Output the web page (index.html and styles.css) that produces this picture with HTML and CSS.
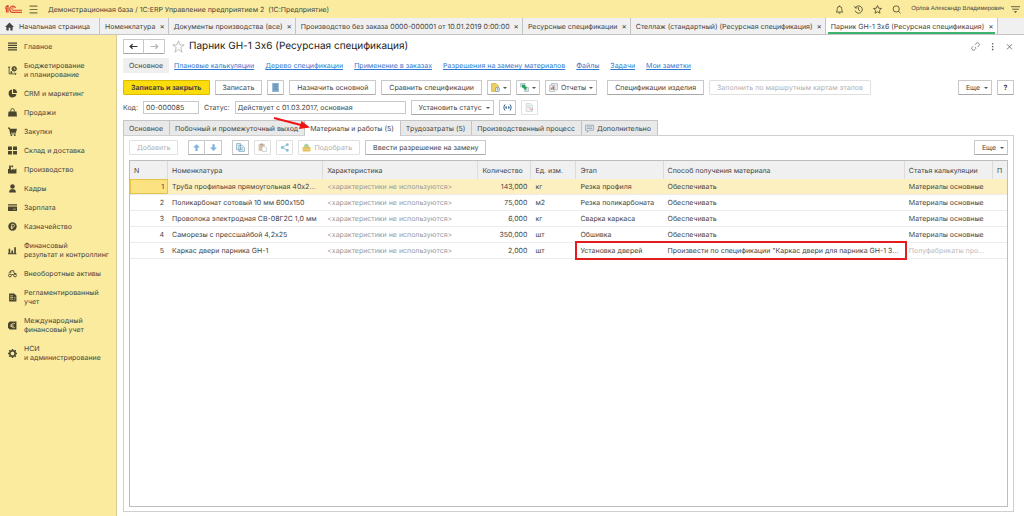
FILE: index.html
```
<!DOCTYPE html>
<html lang="ru">
<head>
    <meta charset="UTF-8">
    <meta name="viewport" content="width=device-width, initial-scale=1.0">
    <title>Парник GH-1 3x6 (Ресурсная спецификация)</title>
    <link rel="stylesheet" href="styles.css">
</head>
<body>

    <header class="topbar">
        <svg class="logo" viewBox="0 0 34 16" fill="none" stroke="#dc4a33" stroke-width="2.500">
            <path d="M0 6h3V15M1 4l5-3v14"/>
            <path d="M21 6a6 6 0 1 0-5 8.500h18"/>
            <path d="M18 6.500a2.500 2.500 0 1 0-2 4h18" stroke-width="2"/>
        </svg>
        <button class="icon-btn" aria-label="Меню">
            <svg viewBox="0 0 16 16" fill="none" stroke="#7d7448" stroke-width="1.800"><path d="M1 2h14M1 8h14M1 14h14"/></svg>
        </button>
        <span class="app-title">Демонстрационная база / 1С:ERP Управление предприятием 2 &nbsp;(1С:Предприятие)</span>
        <div class="top-icons">
            <button class="icon-btn" aria-label="Уведомления">
                <svg viewBox="0 0 16 16" fill="none" stroke="#4d4931" stroke-width="1.500"><path d="M2 12.500c2-2 2-3 2-6a4 4 0 0 1 8 0c0 3 0 4 2 6zM6.500 14.500h3M8 1v2"/></svg>
            </button>
            <button class="icon-btn" aria-label="История">
                <svg viewBox="0 0 16 16" fill="none" stroke="#4d4931" stroke-width="1.500"><path d="M2.500 5A6.500 6.500 0 1 1 2 10M1 2l1.500 3.500L6 5M8 4v4.500l3 2"/></svg>
            </button>
            <button class="icon-btn" aria-label="Избранное">
                <svg viewBox="0 0 16 16" fill="none" stroke="#4d4931" stroke-width="1.500"><path d="M8 1l2.100 4.700 5 .5-3.800 3.400 1.100 5L8 12l-4.400 2.600 1.100-5L.9 6.200l5-.5z"/></svg>
            </button>
            <button class="icon-btn" aria-label="Поиск">
                <svg viewBox="0 0 16 16" fill="none" stroke="#4d4931" stroke-width="1.500"><circle cx="7.500" cy="7" r="5.500"/><path d="M11.500 11l3.500 4"/></svg>
            </button>
            <span class="user">Орлов Александр Владимирович</span>
            <button class="icon-btn" aria-label="Настройки">
                <svg viewBox="0 0 16 16" fill="none" stroke="#4d4931" stroke-width="1.500"><path d="M0 3h16M2 7.500h12"/><path d="M5 11h6l-3 3z" fill="#4d4931" stroke="none"/></svg>
            </button>
        </div>
    </header>

    <nav class="windows">
        <a href="#" class="window home">
            <svg viewBox="0 0 16 16" fill="#444"><path d="M8 1L0 9h2.500v6H6.500v-5h3v5h4V9H16z"/></svg>
            Начальная страница
        </a>
        <a href="#" class="window">Номенклатура <span class="close">×</span></a>
        <a href="#" class="window">Документы производства (все) <span class="close">×</span></a>
        <a href="#" class="window">Производство без заказа 0000-000001 от 10.01.2019 0:00:00 <span class="close">×</span></a>
        <a href="#" class="window">Ресурсные спецификации <span class="close">×</span></a>
        <a href="#" class="window">Стеллаж (стандартный) (Ресурсная спецификация) <span class="close">×</span></a>
        <a href="#" class="window current">Парник GH-1 3x6 (Ресурсная спецификация) <span class="close">×</span></a>
    </nav>

    <div class="workspace">
        <nav class="sections">
            <a href="#"><svg viewBox="0 0 16 16"><path d="M0 1h16v2H0zM0 5h16v2H0zM0 9h16v2H0zM0 13h16v2H0z"/></svg>Главное</a>
            <a href="#"><svg viewBox="0 0 16 16" fill="none" stroke="#4a452e" stroke-width="1.500"><path d="M0 2h4M2 2v12h11M4 11h4M6 9v5M12 11.500l2.500 2.500-2.500 2"/><circle cx="11" cy="5" r="4" fill="#4a452e"/><path d="M11 2.500v3h2.500" stroke="#fbeb9e"/></svg>Бюджетирование<br>и планирование</a>
            <a href="#"><svg viewBox="0 0 16 16"><path d="M7 1a7 7 0 1 0 8 8H7z"/><path d="M9 0a7 7 0 0 1 7 7H9z"/></svg>CRM и маркетинг</a>
            <a href="#"><svg viewBox="0 0 16 16"><path d="M1 6h14l1 9H0z"/><path d="M5 8V4a3 3 0 0 1 6 0v4" fill="none" stroke="#4a452e" stroke-width="1.500"/></svg>Продажи</a>
            <a href="#"><svg viewBox="0 0 16 16"><path d="M0 1h3l1 2h12l-2 7H5l.5 1.500H14V13H4L2 3H0z"/><circle cx="6" cy="14.500" r="1.500"/><circle cx="12" cy="14.500" r="1.500"/></svg>Закупки</a>
            <a href="#"><svg viewBox="0 0 16 16"><path d="M0 1h7v6H0zM9 1h7v6H9zM0 9h7v6H0zM9 9h7v6H9z"/></svg>Склад и доставка</a>
            <a href="#"><svg viewBox="0 0 16 16"><path d="M0 15V7h2V1h3v6l1 2 4-3v3l5-3v9zM6 1h3v3H6z"/></svg>Производство</a>
            <a href="#"><svg viewBox="0 0 16 16"><circle cx="8" cy="4.500" r="4"/><path d="M2 15c0-4 2-5 4-5.500h4c2 .5 4 1.500 4 5.500z"/></svg>Кадры</a>
            <a href="#"><svg viewBox="0 0 16 16"><path d="M0 2h16v2.500H0zM0 6h16v8H0z"/><path d="M9 11h5" stroke="#fbeb9e"/></svg>Зарплата</a>
            <a href="#"><svg viewBox="0 0 16 16"><circle cx="8" cy="8" r="7.500"/><path d="M6.500 13V4h2.500a2.300 2.300 0 0 1 0 5H5M5 11h4" fill="none" stroke="#fbeb9e" stroke-width="1.300"/></svg>Казначейство</a>
            <a href="#"><svg viewBox="0 0 16 16"><path d="M1 5h3v8H1zM6 8h3v5H6zM11 2h3v11h-3zM0 13h15v1.500H0z"/></svg>Финансовый<br>результат и контроллинг</a>
            <a href="#"><svg viewBox="0 0 16 16" fill="none" stroke="#4a452e" stroke-width="1.600"><circle cx="3.500" cy="11.500" r="2.500"/><circle cx="12.500" cy="11.500" r="2.500"/><path d="M1 7l5-4h4l1 5h4M6 10h4M5 3v4"/></svg>Внеоборотные активы</a>
            <a href="#"><svg viewBox="0 0 16 16"><path d="M2 1h9l4 4v10H2z"/><path d="M4 5h5M4 8h5M4 11h5M11 8h2M11 11h2" stroke="#fbeb9e" stroke-width="1.200"/></svg>Регламентированный<br>учет</a>
            <a href="#"><svg viewBox="0 0 16 16"><path d="M3 1h12v14H3L0 12V4z"/><path d="M12 4.500a4 4 0 1 0 0 7M4 7h6M4 9.500h6" fill="none" stroke="#fbeb9e" stroke-width="1.300"/></svg>Международный<br>финансовый учет</a>
            <a href="#"><svg viewBox="0 0 16 16" fill="none" stroke="#4a452e"><circle cx="8" cy="8" r="4.800" stroke-width="2.800"/><path d="M8 0v3M8 13v3M0 8h3M13 8h3M2.300 2.300l2 2M11.700 11.700l2 2M2.300 13.700l2-2M11.700 4.300l2-2" stroke-width="2.500"/></svg>НСИ<br>и администрирование</a>
        </nav>

        <main class="form">
            <div class="title-row">
                <div class="group">
                    <button class="btn nav-btn" aria-label="Назад"><svg viewBox="0 0 16 16" fill="none" stroke="#333" stroke-width="2.200"><path d="M15 8H2M6.500 4L2 8l4.500 4"/></svg></button>
                    <button class="btn nav-btn" aria-label="Вперед"><svg viewBox="0 0 16 16" fill="none" stroke="#b5b5b5" stroke-width="2"><path d="M1 8h13M9.500 4L14 8l-4.500 4"/></svg></button>
                </div>
                <svg class="star" viewBox="0 0 16 16" fill="none" stroke="#b0b0b0"><path d="M8 1l1.800 5H15l-4.200 3.200L12.500 15 8 11.500 3.500 15l1.700-5.800L1 6h5.200z"/></svg>
                <h1>Парник GH-1 3x6 (Ресурсная спецификация)</h1>
                <div class="title-icons">
                    <button class="icon-btn" aria-label="Ссылка"><svg viewBox="0 0 16 16" fill="none" stroke="#777" stroke-width="1.500"><path d="M7 5l2-2.500a3 3 0 0 1 5 4L12 9M9 11l-2 2.500a3 3 0 0 1-5-4L4 7.500M7 9.500h2"/></svg></button>
                    <button class="icon-btn" aria-label="Действия"><svg viewBox="0 0 16 16" fill="#555"><path d="M7 2h2.500v2.500H7zM7 7h2.500v2.500H7zM7 12h2.500v2.500H7z"/></svg></button>
                    <button class="icon-btn" aria-label="Закрыть"><svg viewBox="0 0 16 16" fill="none" stroke="#666" stroke-width="1.500"><path d="M3.500 4l9 9M12.500 4l-9 9"/></svg></button>
                </div>
            </div>

            <nav class="links">
                <a href="#" class="selected">Основное</a>
                <a href="#">Плановые калькуляции</a>
                <a href="#">Дерево спецификации</a>
                <a href="#">Применение в заказах</a>
                <a href="#">Разрешения на замену материалов</a>
                <a href="#">Файлы</a>
                <a href="#">Задачи</a>
                <a href="#">Мои заметки</a>
            </nav>

            <div class="toolbar">
                <button class="btn primary">Записать и закрыть</button>
                <button class="btn">Записать</button>
                <button class="btn square" aria-label="Список"><svg viewBox="0 0 16 16"><path d="M2 0h12v16H2z" fill="#8fb4d0"/><path d="M4 3h8M4 6h8M4 9h8M4 12h8" stroke="#2f6d9c"/></svg></button>
                <button class="btn">Назначить основной</button>
                <button class="btn">Сравнить спецификации</button>
                <button class="btn drop pic" aria-label="Создать на основании"><svg viewBox="0 0 16 16"><path d="M1 1h8l4 4v10H1z" fill="#f0cf63" stroke="#c49c2c"/><circle cx="11.500" cy="11.500" r="4" fill="#e8eef4" stroke="#58789a"/><path d="M11.500 9v3h2" stroke="#58789a" fill="none"/></svg></button>
                <button class="btn drop pic" aria-label="Перейти"><svg viewBox="0 0 16 16"><path d="M1 1h8v6H1zM8 8h7v7H8z" fill="#dce7ee" stroke="#8aa2b0"/><path d="M3 3h6v3h3l-1 7-7-5z" fill="#28a35c"/></svg></button>
                <button class="btn drop pic"><svg viewBox="0 0 16 16"><path d="M4 1h11v11H4z" fill="#e6edf2" stroke="#8ea0ad"/><path d="M1 4h9v11H1z" fill="#f3f5f6" stroke="#8ea0ad"/><path d="M3 12V8h2v4z" fill="#3c9c62"/><path d="M6 12V6h3v6z" fill="#d5584e"/></svg>Отчеты</button>
                <button class="btn apart">Спецификации изделия</button>
                <button class="btn" disabled>Заполнить по маршрутным картам этапов</button>
                <button class="btn drop right">Еще</button>
                <button class="btn square help">?</button>
            </div>

            <div class="toolbar">
                <label for="code">Код:</label>
                <input class="code" id="code" type="text" value="00-000085">
                <label for="status">Статус:</label>
                <input class="status" id="status" type="text" value="Действует с 01.03.2017, основная">
                <button class="btn drop">Установить статус</button>
                <button class="btn square" aria-label="Обмен"><svg viewBox="0 0 18 16" fill="none" stroke="#2c5d8a" stroke-width="2"><path d="M4 2c-3 4-3 8 0 12M14 2c3 4 3 8 0 12"/><path d="M4.500 8h3M10.500 8h3M6.500 5v6M11.500 5v6" stroke-width="1.500"/></svg></button>
                <button class="btn square" disabled aria-label="Документ"><svg viewBox="0 0 16 16"><path d="M2 1h8l3 3v11H2z" fill="#f1f3f5" stroke="#b9c4cd"/><path d="M4 5h6M4 8h6" stroke="#b9c4cd"/><path d="M8 11h6M12 9l2 2-2 2" stroke="#e2a09c" fill="none" stroke-width="1.500"/></svg></button>
            </div>

            <div class="pages">
                <button class="page">Основное</button>
                <button class="page">Побочный и промежуточный выход</button>
                <button class="page active">Материалы и работы (5)
                    <svg class="arrow" viewBox="0 0 38 14"><path d="M1 2l27 7" stroke="#f01414" stroke-width="2"/><path d="M37 11.500l-11 1.500 2.500-8z" fill="#f01414"/></svg>
                </button>
                <button class="page">Трудозатраты (5)</button>
                <button class="page">Производственный процесс</button>
                <button class="page extra"><svg viewBox="0 0 16 16"><path d="M1 2h14v9H8l-4 4v-4H1z" fill="#dfe6ee" stroke="#73879c"/><path d="M3.500 5h9M3.500 8h9" stroke="#73879c"/></svg>Дополнительно</button>
            </div>

            <section class="panel">
                <div class="toolbar">
                    <button class="btn" disabled>Добавить</button>
                    <div class="group apart">
                        <button class="btn square" aria-label="Вверх"><svg viewBox="0 0 16 16" fill="#7fb2dc"><path d="M8 2l6 6h-4v6H6V8H2z"/></svg></button>
                        <button class="btn square" aria-label="Вниз"><svg viewBox="0 0 16 16" fill="#7fb2dc"><path d="M8 14L2 8h4V2h4v6h4z"/></svg></button>
                    </div>
                    <button class="btn square apart" aria-label="Копировать"><svg viewBox="0 0 16 16" fill="#e4f0f6" stroke="#5d93ad"><path d="M1 1h7v11H1zM5 4h6l4 4v7H5z"/><path d="M7 9h5M7 12h5"/></svg></button>
                    <button class="btn square" disabled aria-label="Вставить"><svg viewBox="0 0 16 16"><path d="M1 2h11v12H1z" fill="#dcc4a4"/><path d="M4 1h5v3H4z" fill="#a9a097"/><path d="M7 6h5l3 3v6H7z" fill="#fff" stroke="#a9b1b8"/></svg></button>
                    <button class="btn square" disabled aria-label="Поделиться"><svg viewBox="0 0 16 16" fill="#86bbdc"><path d="M13 3L4 8l9 5" fill="none" stroke="#86bbdc" stroke-width="1.500"/><circle cx="13" cy="3" r="2.500"/><circle cx="4" cy="8" r="2.500"/><circle cx="13" cy="13" r="2.500"/></svg></button>
                    <button class="btn pic" disabled><svg viewBox="0 0 16 16"><path d="M1 7h14v8H1z" fill="#e4bd55"/><path d="M4 7V3l4-2 4 3v3z" fill="#a8cf9c"/><path d="M1 11h14" stroke="#f6e4ae"/></svg>Подобрать</button>
                    <button class="btn">Ввести разрешение на замену</button>
                    <button class="btn drop right">Еще</button>
                </div>

                <div class="list">
                    <table>
                        <colgroup>
                            <col class="c-num"><col class="c-item"><col class="c-item"><col class="c-qty"><col class="c-unit">
                            <col class="c-stage"><col class="c-source"><col class="c-cost"><col class="c-last">
                        </colgroup>
                        <thead>
                            <tr><th>N</th><th>Номенклатура</th><th>Характеристика</th><th>Количество</th><th>Ед. изм.</th><th>Этап</th><th>Способ получения материала</th><th>Статья калькуляции</th><th>П</th></tr>
                        </thead>
                        <tbody>
                            <tr class="marked"><td class="num">1</td><td>Труба профильная прямоугольная 40x2...</td><td class="muted">&lt;характеристики не используются&gt;</td><td class="num">143,000</td><td>кг</td><td>Резка профиля</td><td>Обеспечивать</td><td>Материалы основные</td><td></td></tr>
                            <tr><td class="num">2</td><td>Поликарбонат сотовый 10 мм 600x150</td><td class="muted">&lt;характеристики не используются&gt;</td><td class="num">75,000</td><td>м2</td><td>Резка поликарбоната</td><td>Обеспечивать</td><td>Материалы основные</td><td></td></tr>
                            <tr><td class="num">3</td><td>Проволока электродная СВ-08Г2С 1,0 мм</td><td class="muted">&lt;характеристики не используются&gt;</td><td class="num">6,000</td><td>кг</td><td>Сварка каркаса</td><td>Обеспечивать</td><td>Материалы основные</td><td></td></tr>
                            <tr><td class="num">4</td><td>Саморезы с прессшайбой 4,2x25</td><td class="muted">&lt;характеристики не используются&gt;</td><td class="num">350,000</td><td>шт</td><td>Обшивка</td><td>Обеспечивать</td><td>Материалы основные</td><td></td></tr>
                            <tr><td class="num">5</td><td>Каркас двери парника GH-1</td><td class="muted">&lt;характеристики не используются&gt;</td><td class="num">2,000</td><td>шт</td><td>Установка дверей</td><td>Произвести по спецификации "Каркас двери для парника GH-1 3...</td><td class="light">Полуфабрикаты про...</td><td></td></tr>
                        </tbody>
                    </table>
                    <div class="highlight"></div>
                </div>
            </section>
        </main>
    </div>

</body>
</html>
```
FILE: styles.css
```
* {
    box-sizing: border-box;
}
body {
    margin: 0;
    height: 100vh;
    display: flex;
    flex-direction: column;
    font-family: Inter, "Liberation Sans", Arial, sans-serif;
    font-size: 7px;
    font-variant-ligatures: no-contextual;
    line-height: 9px;
    color: #444;
    background: #fff;
    white-space: nowrap;
    text-rendering: geometricPrecision;
}
a {
    color: inherit;
    text-decoration: none;
}
button, input {
    font: inherit;
    color: inherit;
    text-rendering: inherit;
}
svg {
    width: 9px;
    height: 9px;
    flex: none;
}

/* top bar */
.topbar {
    display: flex;
    align-items: center;
    height: 18px;
    padding: 0 4px 0 5px;
    background: #fbeb9e;
}
.logo {
    width: 17px;
    height: 8px;
}
.icon-btn {
    display: flex;
    padding: 0;
    border: none;
    background: none;
    cursor: pointer;
}
.topbar > .icon-btn {
    margin: 0 10px 0 7px;
}
.top-icons {
    display: flex;
    align-items: center;
    gap: 10px;
    margin-left: auto;
}
.user {
    font-family: "Liberation Sans", Arial, sans-serif;
    font-size: 6px;
}
.user + .icon-btn {
    margin-left: -3px;
}

/* open windows */
.windows {
    display: flex;
    height: 17px;
    background: #f0f0f0;
    border-bottom: 1px solid #c4c4c4;
}
.window {
    display: flex;
    align-items: center;
    gap: 4px;
    padding: 0 3px 0 5px;
    border-right: 1px solid #c4c4c4;
}
.window.home {
    gap: 5px;
    padding: 0 9px 0 5px;
}
.window.current {
    background: linear-gradient(#3cb371, #3cb371) center bottom / calc(100% - 4px) 2px no-repeat #fff;
}
.close {
    font-size: 8px;
}

.workspace {
    flex: 1;
    display: flex;
    min-height: 0;
}

/* sections */
.sections {
    width: 117px;
    flex: none;
    padding-top: 2px;
    background: #fbeb9e;
    border-right: 1px solid #d6cb92;
}
.sections a {
    display: grid;
    grid-template-columns: 9px 1fr;
    column-gap: 7px;
    align-items: center;
    padding: 5px 0 5px 8px;
}
.sections svg {
    grid-row: 1 / 3;
    fill: #4a452e;
}
.sections svg[fill="none"] {
    fill: none;
}

/* form */
.form {
    flex: 1;
    min-width: 0;
    display: flex;
    flex-direction: column;
    padding: 4px 10px 4px 6px;
}
.title-row {
    display: flex;
    align-items: center;
    height: 15px;
}
h1 {
    margin: 0;
    font-size: 10px;
    font-weight: normal;
    line-height: 15px;
    color: #222;
}
.star {
    width: 13px;
    height: 13px;
    margin: 0 4px 0 7px;
}
.title-icons {
    display: flex;
    gap: 8px;
    margin-left: auto;
}
.links {
    display: flex;
    align-items: center;
    gap: 11px;
    margin: 4px 0 7px;
}
.links a {
    color: #2f78d0;
    text-decoration: underline;
}
.links .selected {
    padding: 3px 6px;
    margin-right: -6px;
    color: #444;
    background: #efefef;
    text-decoration: none;
}
.toolbar {
    display: flex;
    align-items: center;
    gap: 5px;
    margin-bottom: 5px;
}
.btn {
    display: flex;
    align-items: center;
    justify-content: center;
    gap: 4px;
    height: 15px;
    padding: 0 7px;
    border: 1px solid #c8c8c8;
    border-bottom-color: #a8a8a8;
    border-radius: 1px;
    background: #fff;
    cursor: pointer;
}
.btn:disabled {
    color: #b0b0b0;
    border-color: #e0e0e0;
}
.btn.primary {
    font-weight: bold;
    background: #fbdc0c;
    border-color: #d8bb00;
}
.btn.square {
    width: 17px;
    padding: 0;
}
.btn.nav-btn {
    width: 21px;
    padding: 0;
}
.btn.drop {
    padding-right: 3px;
}
.btn.pic {
    gap: 3px;
    padding-left: 3px;
}
.btn.drop::after {
    content: "";
    border: 2px solid transparent;
    border-top-color: #555;
    border-bottom: none;
}
.btn.help {
    font-weight: bold;
}
.apart {
    margin-left: 5px;
}
.right {
    margin-left: auto;
}
.group {
    display: flex;
}
.group .btn + .btn {
    border-left: none;
}
input {
    height: 13px;
    padding: 0 2px;
    border: 1px solid #c8c8c8;
    background: #fff;
}
.code {
    width: 56px;
}
.status {
    width: 171px;
}

/* form pages */
.pages {
    display: flex;
}
.page {
    position: relative;
    display: flex;
    align-items: center;
    gap: 3px;
    height: 15px;
    padding: 0 6px 0 5px;
    border: 1px solid #c4c4c4;
    border-left: none;
    border-bottom: none;
    background: #e9e9e9;
    cursor: pointer;
}
.page:first-child {
    border-left: 1px solid #c4c4c4;
}
.page.active {
    margin-bottom: -1px;
    height: 16px;
    z-index: 1;
    background: #fff;
}
.page.extra {
    padding-left: 3px;
}
.arrow {
    position: absolute;
    left: -32px;
    top: -5px;
    width: 38px;
    height: 14px;
}
.panel {
    flex: 1;
    display: flex;
    flex-direction: column;
    padding: 4px 5px;
    border: 1px solid #cfcfcf;
}

/* materials list */
.list {
    position: relative;
    flex: 1;
    border: 1px solid #bdbdbd;
}
table {
    width: 100%;
    table-layout: fixed;
    border-collapse: separate;
    border-spacing: 0;
}
th {
    height: 18px;
    padding: 0 4px;
    font-weight: normal;
    text-align: left;
    background: #f0f0f0;
    border-right: 1px solid #dcdcdc;
}
th:last-child {
    border-right: none;
}
td {
    height: 16px;
    padding: 0 4px;
    overflow: hidden;
    text-overflow: ellipsis;
    border-bottom: 1px solid #ececec;
}
.num {
    text-align: right;
}
.muted {
    color: #999;
}
.light {
    color: #bbb;
}
.marked td {
    background: #fdf0c0;
}
.marked td:first-child {
    background: #fce281;
    box-shadow: inset 0 0 0 1px #e5c344;
}
.c-num { width: 38px; }
.c-item { width: 155px; }
.c-qty { width: 53px; }
.c-unit { width: 45px; }
.c-stage { width: 87px; }
.c-source { width: 241px; }
.c-cost { width: 88px; }
.c-last { width: 14px; }
.highlight {
    position: absolute;
    top: 80px;
    left: calc(100% * 444 / 876);
    width: calc(100% * 332 / 876);
    height: 19px;
    border: 2px solid #e51c1c;
}
```
